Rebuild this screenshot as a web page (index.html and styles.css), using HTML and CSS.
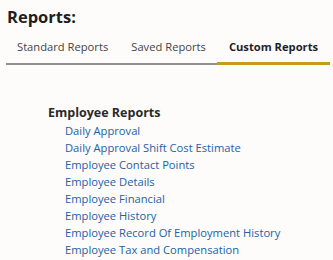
FILE: index.html
```html
<!DOCTYPE html>
<html>
<head>
<meta charset="utf-8">
<link rel="stylesheet" href="styles.css">
</head>
<body>
<div class="page">
  <h1 class="title">Reports:</h1>
  <div class="tabs">
    <div class="tab">Standard Reports</div>
    <div class="tab">Saved Reports</div>
    <div class="tab active">Custom Reports</div>
  </div>
  <div class="section">
    <h2 class="section-title">Employee Reports</h2>
    <ul class="links">
      <li><a href="#">Daily Approval</a></li>
      <li><a href="#">Daily Approval Shift Cost Estimate</a></li>
      <li><a href="#">Employee Contact Points</a></li>
      <li><a href="#">Employee Details</a></li>
      <li><a href="#">Employee Financial</a></li>
      <li><a href="#">Employee History</a></li>
      <li><a href="#">Employee Record Of Employment History</a></li>
      <li><a href="#">Employee Tax and Compensation</a></li>
    </ul>
  </div>
</div>
</body>
</html>
```
FILE: styles.css
```css
html, body {
  margin: 0;
  padding: 0;
  background: #fdfcfa;
}
body {
  font-family: "Open Sans", sans-serif;
  color: #222;
}
.page {
  padding: 4px 5px 0 6px;
}
.title {
  margin: 0 0 0 1px;
  font-size: 16.5px;
  font-weight: 700;
  line-height: 26px;
  color: #1f1f1f;
}
.tabs {
  display: flex;
  border-bottom: 2px solid #8f8f8f;
  margin-top: 6px;
}
.tab {
  white-space: nowrap;
  padding: 2px 11.5px 6px 11.5px;
  font-size: 11.2px;
  line-height: 18px;
  color: #444;
  margin-bottom: -2px;
  border-bottom: 3px solid transparent;
}
.tab:first-child {
  padding-left: 11px;
}
.tab.active {
  font-weight: 700;
  color: #1f1f2a;
  border-bottom-color: #c99a1e;
}
.section {
  padding: 38px 0 0 42px;
}
.section-title {
  margin: 0;
  font-size: 12.5px;
  font-weight: 700;
  line-height: 19px;
  color: #2a2a2a;
}
.links {
  list-style: none;
  margin: 0;
  padding: 0 0 0 17px;
}
.links li {
  font-size: 11.2px;
  line-height: 17px;
}
.links a {
  color: #2360a6;
  text-decoration: none;
}
```
